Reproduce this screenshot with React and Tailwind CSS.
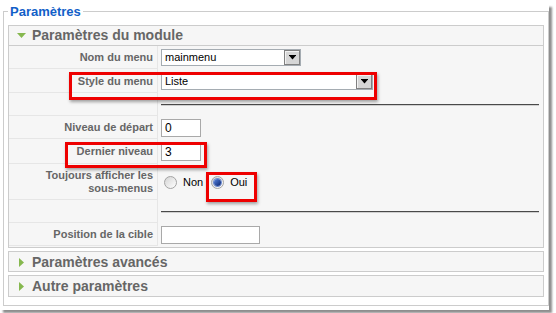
import React from 'react';

const Arrow = () => (
  <svg width="7" height="5" viewBox="0 0 7 5">
    <rect x="0" y="0" width="7" height="1" fill="#000" />
    <polygon points="0.5,1 6.5,1 3.5,4.5" fill="#000" />
  </svg>
);

const Select = ({ width, value }) => (
  <div className={`flex items-center h-[17px] border border-[#a5acb2] bg-white ${width}`}>
    <span className="flex-1 pl-[3px] text-[11px] text-black leading-[15px]">{value}</span>
    <span className="w-[16px] h-[15px] flex items-center justify-center border border-[#808080] bg-[#d6d6d6] shadow-[inset_1px_1px_0_#f2f2f2]">
      <Arrow />
    </span>
  </div>
);

const TextInput = ({ width, value }) => (
  <div className={`h-[18px] border border-[#a9a9a9] bg-white pl-[3px] text-[12px] leading-[16px] text-black ${width}`}>{value}</div>
);

const Radio = ({ checked }) => (
  <span className="w-[13px] h-[13px] rounded-full border border-[#a3a3a3] bg-linear-to-br from-[#d4d4d4] to-white flex items-center justify-center">
    {checked && <span className="w-[7px] h-[7px] rounded-full bg-linear-to-br from-[#5b86e0] to-[#0a2472] shadow-[0_0_0_1px_#6d8bd0]" />}
  </span>
);

const Divider = () => (
  <div className="w-[378px] h-[2px] border-t border-[#4a4a4a] border-b border-b-[#d0d0d0]" />
);

const Row = ({ height, label, children }) => (
  <div className={`flex ${height}`}>
    <div className="w-[149px] shrink-0 flex items-center justify-end pr-[4px] border-r border-b border-[#e6e6e6] text-right text-[11px] font-bold text-[#666] leading-[13px]">
      {label}
    </div>
    <div className="flex-1 flex items-center pl-[3px]">{children}</div>
  </div>
);

const Panel = ({ title, open, children, className }) => (
  <div className={`border border-[#cccccc] bg-[#f6f6f6] ${className}`}>
    <div className={`flex items-center h-[20px] pl-[8px] gap-[6px] ${open ? 'border-b border-[#cccccc]' : ''}`}>
      {open ? (
        <svg width="9" height="5" viewBox="0 0 9 5"><polygon points="0,0 9,0 4.5,5" fill="#86b84f" /></svg>
      ) : (
        <svg width="9" height="9" viewBox="0 0 9 9"><polygon points="2,0 7,4.5 2,9" fill="#86b84f" /></svg>
      )}
      <span className="text-[14px] font-bold text-[#666] leading-[17px]">{title}</span>
    </div>
    {children}
  </div>
);

const RedBox = ({ className }) => (
  <div className={`absolute border-[3px] border-[#ee0000] shadow-[1px_2px_3px_rgba(0,0,0,0.35)] ${className}`} />
);

export default function App() {
  return (
    <div className="w-[556px] h-[313px] bg-white font-['Liberation_Sans',Arial,sans-serif]">
      <div className="relative w-[549px] h-[306px] bg-white shadow-[3px_3px_2px_#8e8e8e]">
        <fieldset className="ml-[3px] mt-[4px] w-[546px] h-[302px] border border-[#cccccc] px-[4px] pt-[6px]">
          <legend className="px-[2px] text-[13px] font-bold text-[#1160c8] leading-[15px]">Paramètres</legend>

          <Panel title="Paramètres du module" open className="h-[223px]">
            <Row height="h-[23px]" label="Nom du menu">
              <Select width="w-[140px]" value="mainmenu" />
            </Row>
            <Row height="h-[24px]" label={<span className="pt-[2px]">Style du menu</span>}>
              <Select width="w-[212px]" value="Liste" />
            </Row>
            <Row height="h-[23px]" label="">
              <Divider />
            </Row>
            <Row height="h-[23px]" label="Niveau de départ">
              <TextInput width="w-[40px]" value="0" />
            </Row>
            <Row height="h-[25px]" label="Dernier niveau">
              <TextInput width="w-[40px]" value="3" />
            </Row>
            <Row height="h-[36px]" label={<span>Toujours afficher les<br />sous-menus</span>}>
              <div className="flex items-center ml-[3px] text-[11px] text-black">
                <Radio />
                <span className="ml-[6px]">Non</span>
                <span className="ml-[8px]"><Radio checked /></span>
                <span className="ml-[6px]">Oui</span>
              </div>
            </Row>
            <Row height="h-[23px]" label="">
              <Divider />
            </Row>
            <Row height="h-[23px]" label="Position de la cible">
              <TextInput width="w-[99px]" value="" />
            </Row>
          </Panel>

          <Panel title="Paramètres avancés" className="mt-[3px] h-[21px]" />
          <Panel title="Autre paramètres" className="mt-[3px] h-[22px]" />
        </fieldset>

        <RedBox className="left-[69px] top-[68px] w-[308px] h-[28px]" />
        <RedBox className="left-[65px] top-[138px] w-[142px] h-[26px]" />
        <RedBox className="left-[206px] top-[168px] w-[51px] h-[30px]" />
      </div>
    </div>
  );
}
